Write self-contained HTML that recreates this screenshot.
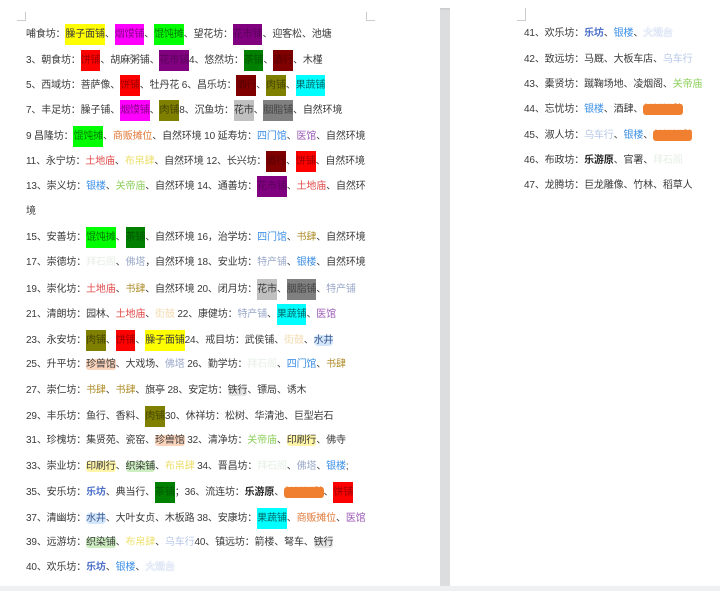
<!DOCTYPE html>
<html><head><meta charset="utf-8"><style>
body{margin:0;width:720px;height:591px;background:#dcdddf;position:relative;overflow:hidden;font-family:"Liberation Sans","Noto Sans CJK SC",sans-serif;font-size:10px;color:#3a3a3a;letter-spacing:-0.15px}
.top{position:absolute;left:0;top:0;width:720px;height:8px;background:#fff;box-shadow:0 1px 2px rgba(0,0,0,.12)}
.pl{position:absolute;left:0;top:8px;width:440px;height:578px;background:#fff}
.pr{position:absolute;left:450px;top:8px;width:270px;height:578px;background:#fff}
.bot{position:absolute;left:0;top:586px;width:720px;height:5px;background:#eef0f2}
.l{position:absolute;white-space:nowrap;height:20px;line-height:20px}
.b{display:inline-block;height:21px;line-height:21px;vertical-align:middle}
.y{background:#ff0}.m{background:#f0f;color:#808}.g{background:#0f0;color:#070}.p{background:#800080;color:#5a005a}.r{background:#f00;color:#900}.dg{background:#008000;color:#050}.dr{background:#800000;color:#500}.o{background:#808000;color:#440}.c{background:#0ff;color:#066}.s{background:#c0c0c0}.gr{background:#808080;color:#444}
.or{color:#e07a3a}.bl{color:#3a8ee6}.pu{color:#9b59b6}.rd{color:#e04848}.ly{color:#ece070}.lg{color:#8ccf5a}.bk{color:#b08f2e}.gy{color:#9aa8c8}.fa{color:#e6efe6}.wh{color:#f3dbb0}
.wj{background:#d3e6fa;border-radius:4px;color:#3a5a90}.zs{background:#fad3bb;border-radius:3px}.tx{background:#e6e6e6;border-radius:3px}.ys{background:#fff5a8;border-radius:3px}.zr{background:#cdeec0;border-radius:3px}
.lf{color:#4a6fc8;font-weight:bold}.ly2{font-weight:bold;color:#222}.ob{background:#f08030;color:#f08030;border-radius:3px}.wc{color:#b8c8e8}.dg2{color:#fff;text-shadow:0 0 1px #6a8ad0}
.mk{position:absolute;border-color:#ccc;border-style:solid;width:8px;height:8px}
</style></head><body>
<div class="top"></div><div class="pl"></div><div class="pr"></div><div class="bot"></div>
<div class="mk" style="left:17px;top:12px;border-width:0 1px 1px 0;width:8px"></div>
<div class="mk" style="left:366px;top:12px;border-width:0 0 1px 1px"></div>
<div class="mk" style="left:517px;top:8px;border-width:0 1px 1px 0;width:8px;height:12px"></div>

<div class="l" style="left:26px;top:24px">哺食坊：<span class="b y">臊子面铺</span>、<span class="b m">烟馍铺</span>、<span class="b g">馄饨摊</span>、望花坊：<span class="b p">花市铺</span>、迎客松、池塘</div>
<div class="l" style="left:26px;top:50px">3、朝食坊：<span class="b r">饼铺</span>、胡麻粥铺、<span class="b p">花市铺</span>4、悠然坊：<span class="b dg">茶铺</span>、<span class="b dr">酒行</span>、木槿</div>
<div class="l" style="left:26px;top:75px">5、西域坊：菩萨像、<span class="b r">饼铺</span>、牡丹花 6、昌乐坊：<span class="b dr">酒行</span>、<span class="b o">肉铺</span>、<span class="b c">果蔬铺</span></div>
<div class="l" style="left:26px;top:100px">7、丰足坊：臊子铺、<span class="b m">烟馍铺</span>、<span class="b o">肉铺</span>8、沉鱼坊：<span class="b s">花市</span>、<span class="b gr">胭脂铺</span>、自然环境</div>
<div class="l" style="left:26px;top:126px">9 昌隆坊：<span class="b g">馄饨摊</span>、<span class="or">商贩摊位</span>、自然环境 10 延寿坊：<span class="bl">四门馆</span>、<span class="pu">医馆</span>、自然环境</div>
<div class="l" style="left:26px;top:151px">11、永宁坊：<span class="rd">土地庙</span>、<span class="ly">布帛肆</span>、自然环境 12、长兴坊：<span class="b dr">酒行</span>、<span class="b r">饼铺</span>、自然环境</div>
<div class="l" style="left:26px;top:176px">13、崇义坊：<span class="bl">银楼</span>、<span class="lg">关帝庙</span>、自然环境 14、通善坊：<span class="b p">花市铺</span>、<span class="rd">土地庙</span>、自然环</div>
<div class="l" style="left:26px;top:202px">境</div>
<div class="l" style="left:26px;top:227px">15、安善坊：<span class="b g">馄饨摊</span>、<span class="b dg">茶铺</span>、自然环境 16，治学坊：<span class="bl">四门馆</span>、<span class="bk">书肆</span>、自然环境</div>
<div class="l" style="left:26px;top:253px">17、崇德坊：<span class="fa">拜石阁</span>、<span class="gy">佛塔</span>，自然环境 18、安业坊：<span class="gy">特产铺</span>、<span class="bl">银楼</span>、自然环境</div>
<div class="l" style="left:26px;top:279px">19、崇化坊：<span class="rd">土地庙</span>、<span class="bk">书肆</span>、自然环境 20、闭月坊：<span class="b s">花市</span>、<span class="b gr">胭脂铺</span>、<span class="gy">特产铺</span></div>
<div class="l" style="left:26px;top:304px">21、清朗坊：园林、<span class="rd">土地庙</span>、<span class="wh">街鼓</span> 22、康健坊：<span class="gy">特产铺</span>、<span class="b c">果蔬铺</span>、<span class="pu">医馆</span></div>
<div class="l" style="left:26px;top:330px">23、永安坊：<span class="b o">肉铺</span>、<span class="b r">饼铺</span>、<span class="b y">臊子面铺</span>24、戒目坊：武侯铺、<span class="wh">街鼓</span>、<span class="wj">水井</span></div>
<div class="l" style="left:26px;top:355px">25、升平坊：<span class="zs">珍兽馆</span>、大戏场、<span class="gy">佛塔</span> 26、勤学坊：<span class="fa">拜石阁</span>、<span class="bl">四门馆</span>、<span class="bk">书肆</span></div>
<div class="l" style="left:26px;top:381px">27、崇仁坊：<span class="bk">书肆</span>、<span class="bk">书肆</span>、旗亭 28、安定坊：<span class="tx">铁行</span>、镖局、诱木</div>
<div class="l" style="left:26px;top:406px">29、丰乐坊：鱼行、香料、<span class="b o">肉铺</span>30、休祥坊：松树、华清池、巨型岩石</div>
<div class="l" style="left:26px;top:431px">31、珍槐坊：集贤苑、瓷窑、<span class="zs">珍兽馆</span> 32、清净坊：<span class="lg">关帝庙</span>、<span class="ys">印刷行</span>、佛寺</div>
<div class="l" style="left:26px;top:457px">33、崇业坊：<span class="ys">印刷行</span>、<span class="zr">织染铺</span>、<span class="ly">布帛肆</span> 34、晋昌坊：<span class="fa">拜石阁</span>、<span class="gy">佛塔</span>、<span class="bl">银楼</span>;</div>
<div class="l" style="left:26px;top:482px">35、安乐坊：<span class="lf">乐坊</span>、典当行、<span class="b dg">茶铺</span>；36、流连坊：<span class="ly2">乐游原</span>、<span class="ob">胡姬酒肆</span>、<span class="b r">饼铺</span></div>
<div class="l" style="left:26px;top:508px">37、清幽坊：<span class="wj">水井</span>、大叶女贞、木板路 38、安康坊：<span class="b c">果蔬铺</span>、<span class="or">商贩摊位</span>、<span class="pu">医馆</span></div>
<div class="l" style="left:26px;top:533px">39、远游坊：<span class="zr">织染铺</span>、<span class="ly">布帛肆</span>、<span class="wc">乌车行</span>40、镇远坊：箭楼、弩车、<span class="tx">铁行</span></div>
<div class="l" style="left:26px;top:558px">40、欢乐坊：<span class="lf">乐坊</span>、<span class="bl">银楼</span>、<span class="dg2">大观台</span></div>

<div class="l" style="left:524px;top:24px">41、欢乐坊：<span class="lf">乐坊</span>、<span class="bl">银楼</span>、<span class="dg2">大观台</span></div>
<div class="l" style="left:524px;top:50px">42、致远坊：马厩、大板车店、<span class="wc">乌车行</span></div>
<div class="l" style="left:524px;top:75px">43、橐贤坊：蹴鞠场地、凌烟阁、<span class="lg">关帝庙</span></div>
<div class="l" style="left:524px;top:100px">44、忘忧坊：<span class="bl">银楼</span>、酒肆、<span class="ob">胡姬酒肆</span></div>
<div class="l" style="left:524px;top:126px">45、淑人坊：<span class="wc">乌车行</span>、<span class="bl">银楼</span>、<span class="ob">胡姬酒肆</span></div>
<div class="l" style="left:524px;top:151px">46、布政坊：<span class="ly2">乐游原</span>、官署、<span class="fa">拜石阁</span></div>
<div class="l" style="left:524px;top:176px">47、龙腾坊：巨龙雕像、竹林、稻草人</div>
</body></html>
